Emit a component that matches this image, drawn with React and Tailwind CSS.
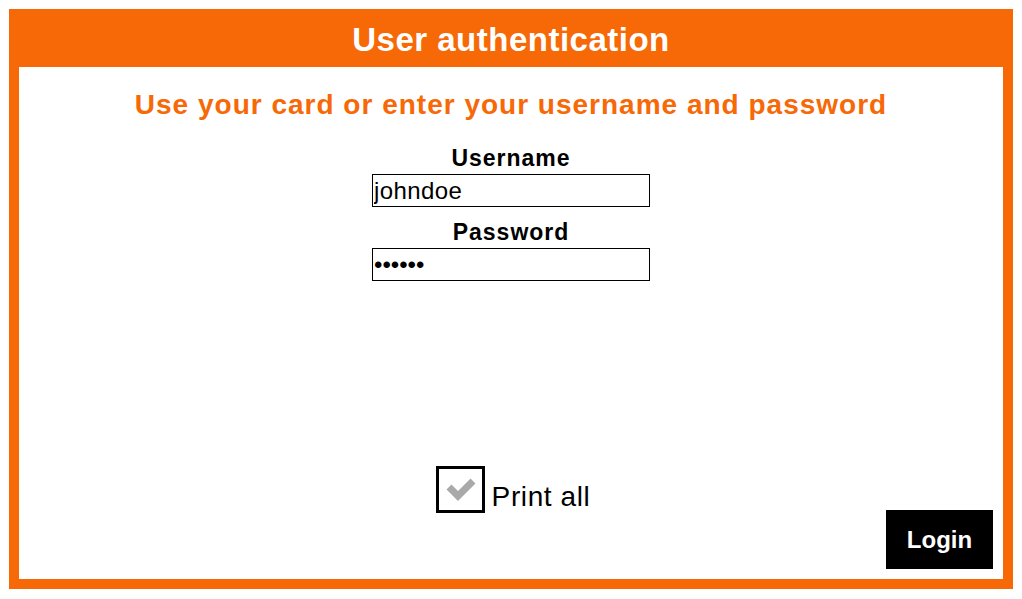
import React from "react";

export default function App() {
  return (
    <div className="w-[1022px] h-[599px] bg-white pt-[9px] px-[9px] font-['Liberation_Sans',Arial,sans-serif]">
      <div className="w-[1004px] h-[580px] bg-[#f76806] px-[10px] pb-[10px] flex flex-col">
        {/*Header*/}
        <div className="h-[58px] pt-[3px] flex items-center justify-center">
          <h1 className="text-white font-bold text-[33px] leading-[36px] tracking-[0.5px]">User authentication</h1>
        </div>

        {/*Form panel*/}
        <div className="flex-1 bg-white flex flex-col items-center pt-[23px] pb-[10px] px-[10px]">
          <h2 className="text-[#f76806] font-bold text-[28px] leading-[30px] tracking-[1px]">
            Use your card or enter your username and password
          </h2>

          <label className="mt-[26px] text-black font-bold text-[23px] leading-[24px] tracking-[1px]">Username</label>
          <input
            type="text"
            defaultValue="johndoe"
            readOnly
            className="mt-[4px] w-[278px] h-[33px] border border-black px-[1px] text-[24px] tracking-[0.4px] text-black outline-none"
          />

          <label className="mt-[13px] text-black font-bold text-[23px] leading-[24px] tracking-[1px]">Password</label>
          <input
            type="password"
            defaultValue="secret"
            readOnly
            className="mt-[4px] w-[278px] h-[33px] border border-black px-[1px] text-[24px] text-black outline-none"
          />

          <div className="flex-1" />

          {/*Print all*/}
          <div className="flex items-start gap-[7px] ml-[4px]">
            <div className="w-[49px] h-[47px] border-[3px] border-black bg-white">
              <svg width="43" height="41" viewBox="3 3 43 41">
                <polyline points="13,21 22,30 37,15" fill="none" stroke="#a9a9a9" strokeWidth="7" strokeLinejoin="miter" />
              </svg>
            </div>
            <span className="mt-[16px] text-[28px] leading-[30px] tracking-[0.6px] text-black">Print all</span>
          </div>

          {/*Login*/}
          <div className="self-stretch flex justify-end -mt-[3px]">
            <button className="w-[107px] h-[59px] bg-black text-white font-bold text-[24px]">Login</button>
          </div>
        </div>
      </div>
    </div>
  );
}
